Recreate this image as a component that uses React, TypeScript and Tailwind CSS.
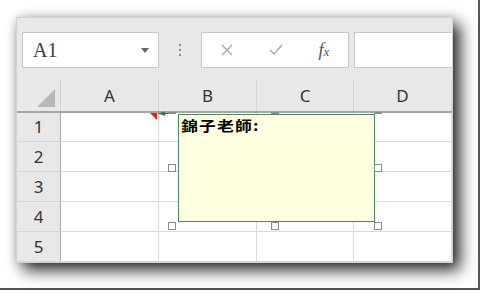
import React from "react";

const cols = ["A", "B", "C", "D"];
const colW = ["w-[98px]", "w-[98px]", "w-[97px]", "w-[98px]"];
const rowH = ["h-[29px]", "h-[30px]", "h-[30px]", "h-[30px]", "h-[30px]"];

function Handle({ cls }: { cls: string }) {
  return <div className={`absolute w-[8px] h-[8px] bg-white border border-[#8c8c8c] ${cls}`} />;
}

export default function App() {
  return (
    <div className="w-[484px] h-[294px] bg-white overflow-hidden" style={{ fontFamily: '"Noto Sans", sans-serif' }}>
      <div className="w-[480px] h-[290px] border-r-2 border-b-2 border-[#56564e] pl-[16px] pt-[17px]">
        <div className="relative w-[437px] h-[246px] bg-[#e8e8e8] border border-[#d2d2d2] shadow-[7px_7px_15px_rgba(0,0,0,0.85),0_0_8px_rgba(0,0,0,0.15)] overflow-hidden">
          {/* toolbar */}
          <div className="flex items-center h-[36px] mt-[14px] pl-[5px]">
            <div className="w-[137px] h-[36px] bg-white border border-[#c8c8c8] flex items-center pl-[10px] pr-[9px]">
              <span className="text-[20px] text-[#404040] leading-none" style={{ fontFamily: '"Liberation Serif", "DejaVu Serif", serif' }}>A1</span>
              <div className="ml-auto w-0 h-0 border-l-[4px] border-r-[4px] border-t-[5px] border-l-transparent border-r-transparent border-t-[#666]" />
            </div>
            <div className="w-[42px] flex flex-col items-center gap-[3px]">
              <div className="w-[2px] h-[2px] bg-[#8a8a8a]" />
              <div className="w-[2px] h-[2px] bg-[#8a8a8a]" />
              <div className="w-[2px] h-[2px] bg-[#8a8a8a]" />
            </div>
            <div className="w-[148px] h-[36px] bg-white border border-[#c8c8c8] flex items-center">
              <div className="w-[50px] flex justify-center">
                <svg width="14" height="14" viewBox="0 0 14 14">
                  <path d="M2 2 L12 12 M12 2 L2 12" stroke="#a8a8a8" strokeWidth="1.4" fill="none" />
                </svg>
              </div>
              <div className="w-[48px] flex justify-center">
                <svg width="14" height="12" viewBox="0 0 14 12">
                  <path d="M1 6 L5 10 L13 1" stroke="#a8a8a8" strokeWidth="1.5" fill="none" />
                </svg>
              </div>
              <div className="w-[48px] flex justify-center">
                <span className="italic text-[#555] leading-none" style={{ fontFamily: '"Liberation Serif", serif' }}>
                  <span className="text-[18px]">f</span>
                  <span className="text-[13px]">x</span>
                </span>
              </div>
            </div>
            <div className="flex-1 h-[36px] ml-[5px] bg-white border border-r-0 border-[#c8c8c8]" />
          </div>

          {/* column header */}
          <div className="flex h-[33px] mt-[12px] border-b-2 border-[#a6a6a6]">
            <div className="w-[44px] h-full pt-[2px] border-r border-[#d0d0d0] relative">
              <svg className="absolute left-[20px] top-[8px]" width="19" height="19" viewBox="0 0 19 19">
                <polygon points="0,19 18,19 18,1" fill="#b8b8b8" />
              </svg>
            </div>
            {cols.map((c, i) => (
              <div key={c} className={`${colW[i]} h-full flex items-center justify-center text-[17px] text-[#333] border-r border-[#d4d4d4]`}>
                {c}
              </div>
            ))}
          </div>

          {/* rows */}
          {rowH.map((h, r) => (
            <div key={r} className={`flex ${h}`}>
              <div className="w-[44px] h-full flex items-center justify-center text-[17px] text-[#333] bg-[#e8e8e8] border-r border-b border-r-[#a8a8a8] border-b-[#d6d6d6]">
                {r + 1}
              </div>
              {cols.map((c, i) => (
                <div key={c} className={`${colW[i]} h-full bg-white border-r border-b border-[#dadada]`} />
              ))}
            </div>
          ))}

          {/* comment indicator + arrow */}
          <svg className="absolute left-0 top-0 pointer-events-none" width="437" height="246">
            <polygon points="133,95 140,95 140,102" fill="#e0201a" />
            <polygon points="141,95.5 148,93.5 148,98" fill="#2f7a45" />
            <line x1="141" y1="95.5" x2="151" y2="95.5" stroke="#2f7a45" strokeWidth="1" />
          </svg>

          {/* comment box */}
          <div className="absolute left-[161px] top-[96px] w-[197px] h-[108px] bg-[#ffffe1] border border-[#4a8a5c] pl-[2px] pt-[2px] leading-none">
            <span className="inline-block origin-left scale-x-[1.2] text-[14px] tracking-[1px] font-bold text-black leading-none" style={{ fontFamily: '"Noto Sans CJK TC", "Noto Sans CJK SC", sans-serif' }}>
              錦子老師:
            </span>
          </div>

          {/* top handles peeking */}
          <div className="absolute left-[151px] top-[94px] w-[8px] h-[2px] bg-[#8c8c8c]" />
          <div className="absolute left-[254px] top-[94px] w-[8px] h-[2px] bg-[#8c8c8c]" />
          <div className="absolute left-[357px] top-[94px] w-[8px] h-[2px] bg-[#8c8c8c]" />

          <Handle cls="left-[151px] top-[146px]" />
          <Handle cls="left-[357px] top-[146px]" />
          <Handle cls="left-[151px] top-[204px]" />
          <Handle cls="left-[254px] top-[204px]" />
          <Handle cls="left-[357px] top-[204px]" />
        </div>
      </div>
    </div>
  );
}
